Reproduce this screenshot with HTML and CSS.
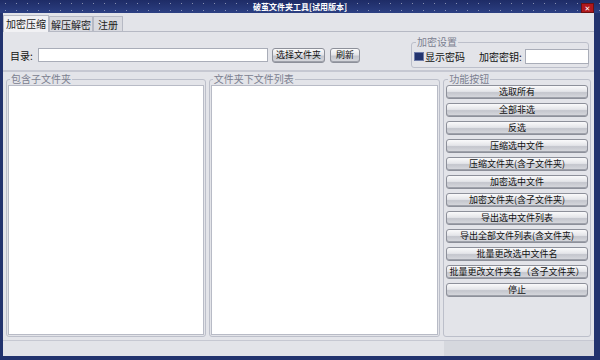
FILE: index.html
```html
<!DOCTYPE html>
<html lang="zh-CN">
<head>
  <meta charset="UTF-8" />
  <title>破茧文件夹工具</title>
  <link rel="stylesheet" href="styles.css">
</head>
<body>
  <div class="window">
    <div class="titlebar">
      <span class="title">破茧文件夹工具[试用版本]</span>
      <span class="close">✕</span>
    </div>
    <div class="client">
      <div class="tabs">
        <div class="tab active">加密压缩</div>
        <div class="tab">解压解密</div>
        <div class="tab short">注册</div>
      </div>
      <div class="panel">
        <div class="toprow">
          <div class="dirrow">
            <span class="label">目录:</span>
            <div class="input dir"></div>
            <button class="btn small">选择文件夹</button>
            <button class="btn small">刷新</button>
          </div>
          <fieldset class="group enc">
            <legend>加密设置</legend>
            <span class="check"></span><span class="checklabel">显示密码</span>
            <span class="keylabel">加密密钥:</span>
            <div class="input key"></div>
          </fieldset>
        </div>
        <div class="lower">
          <fieldset class="group sub">
            <legend>包含子文件夹</legend>
            <div class="list"></div>
          </fieldset>
          <fieldset class="group files">
            <legend>文件夹下文件列表</legend>
            <div class="list"></div>
          </fieldset>
          <fieldset class="group funcs">
            <legend>功能按钮</legend>
            <button class="btn">选取所有</button>
            <button class="btn">全部非选</button>
            <button class="btn">反选</button>
            <button class="btn">压缩选中文件</button>
            <button class="btn">压缩文件夹(含子文件夹)</button>
            <button class="btn">加密选中文件</button>
            <button class="btn">加密文件夹(含子文件夹)</button>
            <button class="btn">导出选中文件列表</button>
            <button class="btn">导出全部文件列表(含文件夹)</button>
            <button class="btn">批量更改选中文件名</button>
            <button class="btn">批量更改文件夹名（含子文件夹）</button>
            <button class="btn">停止</button>
          </fieldset>
        </div>
      </div>
      <div class="status">
        <div class="cell left"></div>
        <div class="cell right"></div>
      </div>
    </div>
  </div>
</body>
</html>
```

FILE: styles.css
```css
html, body {
  margin: 0;
  padding: 0;
  width: 600px;
  height: 360px;
  overflow: hidden;
  font-family: "Noto Sans CJK SC", "DejaVu Sans", sans-serif;
  font-size: 10px;
  color: #111;
  white-space: nowrap;
}

.window {
  width: 600px;
  height: 360px;
  box-sizing: border-box;
  background: #22336e;
  padding: 0 6px 5px 3px;
  display: flex;
  flex-direction: column;
}

.titlebar {
  height: 13px;
  position: relative;
  background:
    radial-gradient(circle, rgba(255,255,255,0.45) 0.6px, transparent 1px) 0 0 / 11px 7px,
    linear-gradient(#1e2c66, #2c3f82);
  margin: 0 -6px 0 -3px;
  display: flex;
  justify-content: center;
  align-items: center;
}

.title {
  color: #fff;
  font-weight: bold;
  font-size: 8px;
  line-height: 13px;
}

.close {
  position: absolute;
  right: 6px;
  top: 3px;
  width: 11px;
  height: 8px;
  background: #b0181c;
  color: #fff;
  font-size: 7px;
  line-height: 8px;
  text-align: center;
  border: 1px solid #6b1012;
}

.client {
  flex: 1;
  background: #e3e4e9;
  display: flex;
  flex-direction: column;
  padding-top: 3px;
}

.tabs {
  display: flex;
  height: 15px;
}

.tab {
  padding: 0 1px;
  height: 15px;
  line-height: 15px;
  font-size: 10px;
  background: #d9dae0;
  border: 1px solid #b6b9c4;
  border-bottom: none;
  margin-right: 0;
  color: #222;
}

.tab.short {
  padding: 0 4px;
}

.tab.active {
  background: #f1f1f4;
  height: 16px;
  margin-top: -1px;
  padding: 0 2px;
  position: relative;
  z-index: 1;
}

.panel {
  flex: 1;
  border-top: 1px solid #b6b9c4;
  display: flex;
  flex-direction: column;
  padding: 0 3px;
}

.toprow {
  display: flex;
  align-items: flex-end;
  height: 36px;
  border-bottom: 2px solid #c6c8d2;
  padding: 0 5px 2px 7px;
  margin: 0 -3px;
}

.dirrow {
  display: flex;
  align-items: center;
  gap: 4px;
  height: 16px;
  margin-bottom: 5px;
}

.label {
  font-size: 10px;
  width: 24px;
}

.input {
  background: #fff;
  border: 1px solid #a9adb8;
  box-sizing: border-box;
}

.input.dir {
  width: 230px;
  height: 14px;
}

.btn {
  font-family: inherit;
  font-size: 9px;
  padding: 0;
  height: 14px;
  line-height: 12px;
  border: 1px solid #8d909a;
  border-radius: 3px;
  background: linear-gradient(#fafafb, #e4e5e9 45%, #c4c6cd 55%, #d9dadf);
  color: #111;
  box-shadow: inset 0 -1px 0 #9ea1aa;
  white-space: nowrap;
  overflow: hidden;
}

.btn.small {
  padding: 0 3px;
  font-size: 9px;
  height: 15px;
}

.btn.small + .btn.small {
  margin-left: 1px;
  padding: 0 5px;
}

.group {
  border: 1px solid #bcbfca;
  border-radius: 3px;
  margin: 0;
  padding: 0;
  box-sizing: border-box;
  min-width: 0;
}

.group legend {
  color: #7b8090;
  font-size: 10px;
  padding: 0 1px;
  margin-left: 2px;
  line-height: 10px;
}

.enc {
  margin-left: auto;
  width: 178px;
  height: 31px;
  display: flex;
  align-items: center;
  padding: 0 2px 2px 2px;
}

.check {
  width: 8px;
  height: 7px;
  background: #22336e;
  border: 1px solid #6c7aa8;
  margin-right: 1px;
  flex: none;
}

.checklabel {
  font-size: 10px;
}

.keylabel {
  font-size: 10px;
  margin-left: 14px;
  margin-right: 3px;
}

.input.key {
  width: 64px;
  height: 15px;
  flex: none;
}

.lower {
  flex: 1;
  display: flex;
  gap: 3px;
  padding: 2px 0 3px 0;
}

.sub {
  width: 200px;
  padding: 1px;
}

.files {
  width: 232px;
  padding: 1px;
}

.funcs {
  width: 148px;
  padding: 1px 2px 0 2px;
  display: flex;
  flex-direction: column;
  gap: 4px;
}

.list {
  background: #fff;
  border: 1px solid #b8bbc6;
  height: 250px;
  box-sizing: border-box;
}

.status {
  height: 15px;
  display: flex;
  border-top: 1px solid #c6c8d2;
}

.cell.left {
  width: 441px;
  background: #e3e4e9;
}

.cell.right {
  flex: 1;
  background: #d6d8de;
}
```
